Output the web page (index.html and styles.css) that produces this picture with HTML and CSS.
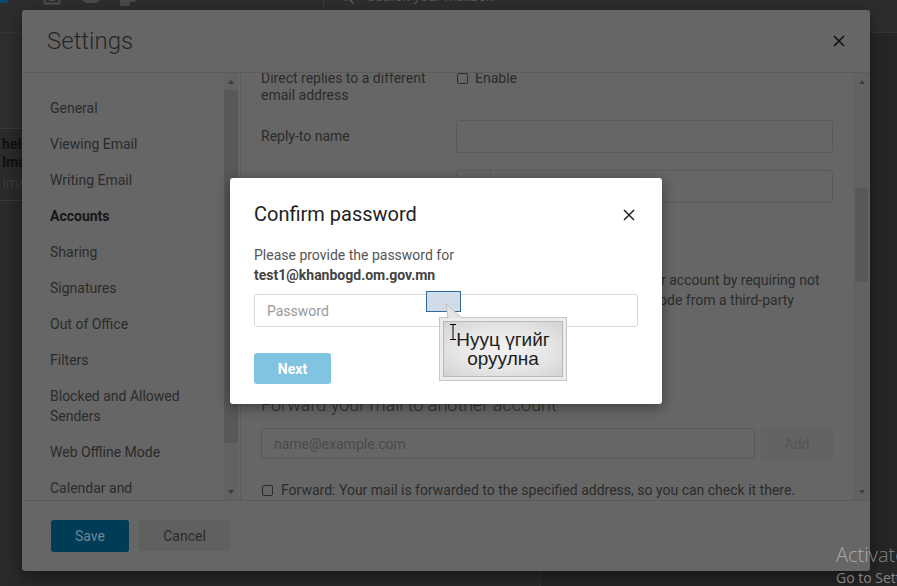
FILE: index.html
```html
<!DOCTYPE html>
<html lang="en">
<head>
<meta charset="UTF-8">
<meta name="viewport" content="width=device-width, initial-scale=1.0">
<title>Settings - Confirm password</title>
<link rel="stylesheet" href="styles.css">
</head>
<body>

<div class="app">
    <div class="app-top">
        <div class="app-tools">
            <span class="brand-mark"></span>
            <svg class="tool tool-cal" width="18" height="16" viewBox="0 0 18 16"><rect x="1.5" y="1.5" width="15" height="13" rx="1.5" fill="none" stroke="#4e4e4e" stroke-width="2"/><rect x="6" y="9" width="6" height="3" fill="#4e4e4e"/></svg>
            <svg class="tool tool-chat" width="18" height="16" viewBox="0 0 18 16"><rect x="0" y="0" width="18" height="15" rx="5" fill="#4a4a4a"/></svg>
            <svg class="tool tool-people" width="16" height="16" viewBox="0 0 16 16"><rect x="3" y="0" width="13" height="12" rx="2" fill="#4a4a4a"/><rect x="0" y="6" width="10" height="10" rx="2" fill="#4a4a4a"/></svg>
        </div>
        <div class="app-search">
            <svg class="search-icon" width="14" height="14" viewBox="0 0 14 14"><circle cx="5.5" cy="5.5" r="4.5" fill="none" stroke="#5a5a5a" stroke-width="1.6"/><line x1="9" y1="9" x2="13.5" y2="13.5" stroke="#5a5a5a" stroke-width="1.6"/></svg>
            <span class="search-text">Search your mailbox</span>
        </div>
    </div>
    <div class="app-main">
        <div class="msg-list">
            <div class="msg msg-first"></div>
            <div class="msg">
                <span class="msg-from">hello</span>
                <span class="msg-subject">Image</span>
                <span class="msg-preview">Image attached</span>
            </div>
        </div>
        <div class="reading"></div>
    </div>
</div>

<div class="settings">
    <div class="settings-head">
        <h2>Settings</h2>
        <svg width="12" height="12" viewBox="0 0 12 12"><path d="M1 1 L11 11 M11 1 L1 11" stroke="#111" stroke-width="1.6"/></svg>
    </div>

    <div class="settings-body">
        <div class="nav">
            <ul>
                <li>General</li>
                <li>Viewing Email</li>
                <li>Writing Email</li>
                <li class="on">Accounts</li>
                <li>Sharing</li>
                <li>Signatures</li>
                <li>Out of Office</li>
                <li>Filters</li>
                <li>Blocked and Allowed<br>Senders</li>
                <li>Web Offline Mode</li>
                <li>Calendar and<br>Contacts</li>
            </ul>
            <div class="scroll nav-scroll">
                <span class="arr-box"><span class="arr-up"></span></span>
                <span class="thumb"></span>
                <span class="arr-box"><span class="arr-down"></span></span>
            </div>
        </div>

        <div class="pane">
            <div class="pane-inner">
                <div class="field field-top">
                    <div class="field-label">Direct replies to a different email address</div>
                    <span class="check"></span>
                    <span class="check-label">Enable</span>
                </div>
                <div class="field field-2">
                    <div class="field-label">Reply-to name</div>
                    <div class="text-input"></div>
                </div>
                <div class="field field-3">
                    <div class="field-label">Reply-to address</div>
                    <div class="text-input"><span class="prefix"></span><span class="ghost">name@example.com</span></div>
                </div>

                <h4 class="section-title">Two-step verification</h4>
                <p class="section-text">Two-step verification adds an essential layer of protection to your account by requiring not<br>only your password but also your one-time security verification code from a third-party<br>authenticator app.</p>
                <button class="btn-setup">Set up</button>

                <h4 class="section-title forward-title">Forward your mail to another account</h4>
                <div class="add-row">
                    <div class="text-input add-input">name@example.com</div>
                    <button class="btn-add">Add</button>
                </div>
                <div class="check-row">
                    <span class="check"></span>
                    <span>Forward: Your mail is forwarded to the specified address, so you can check it there.</span>
                </div>
            </div>
            <div class="scroll pane-scroll">
                <span class="arr-box"><span class="arr-up"></span></span>
                <span class="thumb"></span>
                <span class="track"></span>
                <span class="arr-box"><span class="arr-down"></span></span>
            </div>
        </div>
    </div>

    <div class="settings-foot">
        <button class="btn-save">Save</button>
        <button class="btn-cancel">Cancel</button>
    </div>
</div>

<div class="confirm">
    <div class="confirm-head">
        <h3>Confirm password</h3>
        <svg width="12" height="12" viewBox="0 0 12 12"><path d="M1 1 L11 11 M11 1 L1 11" stroke="#222" stroke-width="1.5"/></svg>
    </div>
    <p class="confirm-text">Please provide the password for<br><b>test1@khanbogd.om.gov.mn</b></p>
    <input class="pw" type="password" placeholder="Password">
    <button class="btn-next">Next</button>
</div>

<div class="hint-target"></div>
<div class="balloon">
    <svg class="balloon-tail" width="20" height="16" viewBox="0 0 20 16"><path d="M1 1 L17 15 L3 15 Z" fill="#e4e4e4"/><path d="M3 15 L1 1 L17 15" fill="none" stroke="#c2c2c2" stroke-width="1"/></svg>
    <svg class="ibeam" width="8" height="16" viewBox="0 0 8 16"><path d="M1 0.5 H7 M4 0.5 V15.5 M1 15.5 H7" stroke="#000" stroke-width="1"/></svg>
    <div class="balloon-inner">Нууц үгийг<br>оруулна</div>
</div>

<div class="activate">
    <div class="activate-big">Activate Windows</div>
    <div class="activate-small">Go to Settings to activate Windows.</div>
</div>

</body>
</html>
```

FILE: styles.css
```css
* { box-sizing: border-box; }

html, body { margin: 0; }

body {
    width: 897px;
    height: 586px;
    overflow: hidden;
    position: relative;
    background-color: #272727;
    font-family: Roboto, "Liberation Sans", Arial, sans-serif;
}

button { font-family: inherit; }

/* app behind the dialogs */
.app { height: 100%; display: flex; flex-direction: column; }

.app-top {
    height: 33px;
    flex: none;
    background-color: #2d2d2d;
    border-bottom: 1px solid #363636;
    display: flex;
    align-items: flex-start;
}

.app-tools { width: 323px; display: flex; align-items: flex-start; }

.brand-mark { width: 8px; height: 3px; background-color: #0b4a70; }

.tool { margin-top: -11px; }
.tool-cal { margin-left: 35px; }
.tool-chat { margin-left: 21px; margin-top: -12px; }
.tool-people { margin-left: 20px; margin-top: -10px; }

.app-search {
    flex: 1;
    height: 100%;
    border-left: 1px solid #3a3a3a;
    display: flex;
    align-items: flex-start;
    padding-left: 16px;
}

.search-icon { margin-top: -10px; }

.search-text {
    margin-top: -12px;
    margin-left: 13px;
    font-size: 14px;
    color: #595959;
}

.app-main { flex: 1; display: flex; }

.msg-list {
    width: 541px;
    background-color: #2a2a2a;
    border-right: 1px solid #343434;
}

.msg {
    height: 72px;
    padding: 6px 0 0 2px;
    font-size: 14px;
    line-height: 18px;
    border-bottom: 1px solid #3a3a3a;
}

.msg-first { height: 96px; padding: 0; background-color: #2e2e2e; }

.msg span { display: block; white-space: nowrap; }
.msg-from, .msg-subject { font-weight: 700; color: #101010; }
.msg-preview { margin-top: 3px; color: #3a3a3a; }

.reading { flex: 1; background-color: #262626; }

/* settings window */
.settings {
    position: absolute;
    left: 22px;
    top: 10px;
    width: 848px;
    height: 561px;
    background-color: #666;
    border-radius: 3px;
    box-shadow: 0 6px 18px rgba(0, 0, 0, 0.45);
    display: flex;
    flex-direction: column;
    color: #2b2b2b;
}

.settings-head {
    height: 63px;
    flex: none;
    border-bottom: 1px solid #5b5b5b;
    display: flex;
    align-items: center;
    justify-content: space-between;
    padding: 0 25px;
}

.settings-head h2 {
    margin: 0;
    font-size: 24px;
    font-weight: 300;
    color: #262626;
}

.settings-body {
    height: 428px;
    flex: none;
    border-bottom: 1px solid #5b5b5b;
    display: flex;
}

.nav {
    width: 219px;
    flex: none;
    border-right: 1px solid #5b5b5b;
    display: flex;
}

.nav ul {
    list-style: none;
    margin: 0;
    padding: 17px 0 0 0;
    width: 202px;
    overflow: hidden;
}

.nav li {
    padding: 8px 0 8px 28px;
    font-size: 14px;
    line-height: 20px;
    color: #2b2b2b;
}

.nav li.on { font-weight: 700; color: #161616; }

.scroll {
    background-color: #626262;
    display: flex;
    flex-direction: column;
    align-items: center;
}

.nav-scroll { width: 14px; margin-right: 2px; }

.arr-box {
    height: 17px;
    width: 100%;
    flex: none;
    display: flex;
    align-items: center;
    justify-content: center;
}

.arr-up {
    border-left: 3px solid transparent;
    border-right: 3px solid transparent;
    border-bottom: 4px solid #3c3c3c;
}

.arr-down {
    border-left: 3px solid transparent;
    border-right: 3px solid transparent;
    border-top: 4px solid #3c3c3c;
}

.nav-scroll .thumb {
    width: 100%;
    height: 353px;
    background-color: #585858;
}

.nav-scroll .arr-box:last-child { margin-top: auto; }

.pane {
    flex: 1;
    display: flex;
    overflow: hidden;
}

.pane-inner {
    flex: 1;
    padding: 0 20px;
    margin-top: -3px;
    font-size: 14px;
    color: #2b2b2b;
}

.pane-scroll { width: 17px; flex: none; }

.pane-scroll .thumb {
    margin-top: 98px;
    width: 13px;
    height: 94px;
    background-color: #585858;
}

.pane-scroll .track { flex: 1; }

.field { display: flex; align-items: center; }

.field-label { width: 195px; flex: none; padding-right: 12px; line-height: 17px; }

.field-top { align-items: flex-start; line-height: 17px; }

.check {
    width: 11px;
    height: 11px;
    flex: none;
    border: 1px solid #2c2c2c;
    border-radius: 2px;
}

.field-top .check { margin: 3px 7px 0 1px; }

.field-2 { margin-top: 16px; }
.field-3 { margin-top: 17px; }

.text-input {
    flex: 1;
    height: 33px;
    border: 1px solid #5a5a5a;
    border-radius: 3px;
    display: flex;
    align-items: center;
}

.prefix { width: 34px; height: 100%; border-right: 1px solid #5a5a5a; }

.ghost { padding-left: 12px; color: #4c4c4c; }

.section-title {
    margin: 29px 0 0;
    font-size: 18px;
    line-height: 24px;
    font-weight: 400;
    color: #2b2b2b;
}

.section-text { margin: 14px 0 0; line-height: 20px; white-space: nowrap; }

.btn-setup {
    margin-top: 14px;
    height: 30px;
    padding: 0 16px;
    border: none;
    border-radius: 3px;
    background-color: #003b57;
    color: #6d8796;
    font-size: 14px;
}

.forward-title { margin-top: 19px; font-weight: 300; color: #2e2e2e; }

.add-row { margin-top: 11px; display: flex; gap: 6px; }

.add-input {
    height: 31px;
    padding-left: 12px;
    color: #4a4a4a;
}

.btn-add {
    width: 72px;
    height: 31px;
    border: 1px solid #626262;
    border-radius: 3px;
    background-color: #636363;
    color: #555;
    font-size: 14px;
}

.check-row {
    margin-top: 21px;
    display: flex;
    align-items: center;
    line-height: 20px;
    white-space: nowrap;
}

.check-row .check { margin: 0 8px 0 1px; }

.settings-foot {
    flex: 1;
    display: flex;
    align-items: flex-start;
    gap: 10px;
    padding: 19px 0 0 29px;
}

.btn-save {
    width: 78px;
    height: 32px;
    border: none;
    border-radius: 3px;
    background-color: #003b57;
    color: #6d8796;
    font-size: 14px;
}

.btn-cancel {
    width: 91px;
    height: 31px;
    border: none;
    border-radius: 3px;
    background-color: #606060;
    color: #2a2a2a;
    font-size: 14px;
}

/* confirm password dialog */
.confirm {
    position: absolute;
    left: 230px;
    top: 178px;
    width: 432px;
    height: 226px;
    padding: 24px 24px 0;
    background-color: #fff;
    border-radius: 3px;
    box-shadow: 0 3px 14px rgba(0, 0, 0, 0.4);
}

.confirm-head {
    display: flex;
    align-items: center;
    justify-content: space-between;
    padding-right: 3px;
}

.confirm-head h3 {
    margin: 0;
    font-size: 20px;
    line-height: 24px;
    font-weight: 400;
    color: #222;
}

.confirm-head svg { margin-top: 2px; }

.confirm-text {
    margin: 19px 0 0;
    font-size: 14px;
    line-height: 20px;
    color: #555;
}

.confirm-text b { color: #444; }

.pw {
    display: block;
    margin-top: 9px;
    width: 100%;
    height: 33px;
    padding: 0 12px;
    border: 1px solid #d9d9d9;
    border-radius: 3px;
    font-family: Roboto, "Liberation Sans", sans-serif;
    font-size: 14px;
    outline: none;
}

.pw::placeholder { color: #999; }

.btn-next {
    display: block;
    margin-top: 26px;
    width: 77px;
    height: 31px;
    border: none;
    border-radius: 3px;
    background-color: #80c4e1;
    color: #fff;
    font-size: 14px;
    font-weight: 700;
}

/* balloon tip */
.hint-target {
    position: absolute;
    left: 426px;
    top: 291px;
    width: 35px;
    height: 21px;
    background-color: #d0dce7;
    border: 1px solid #30699a;
}

.balloon {
    position: absolute;
    left: 439px;
    top: 317px;
    width: 128px;
    height: 64px;
    padding: 3px;
    background-color: #ececec;
    border: 1px solid #c6c6c6;
}

.balloon-tail { position: absolute; left: 5px; top: -15px; }

.ibeam { position: absolute; left: 9px; top: 6px; }

.balloon-inner {
    height: 100%;
    border: 1px solid #b9b9b9;
    background: radial-gradient(ellipse at center, #f3f3f3 0%, #e6e6e6 55%, #d3d3d3 100%);
    display: flex;
    align-items: center;
    justify-content: center;
    text-align: center;
    font-family: "Liberation Sans", Arial, sans-serif;
    font-size: 19px;
    line-height: 19px;
    color: #1e1e1e;
}

/* windows watermark */
.activate {
    position: absolute;
    left: 836px;
    top: 542px;
    white-space: nowrap;
    font-family: "Open Sans", "Noto Sans", sans-serif;
    color: rgba(255, 255, 255, 0.45);
}

.activate-big { font-size: 20px; line-height: 26px; font-weight: 300; }
.activate-small { font-size: 14px; line-height: 20px; }
```
